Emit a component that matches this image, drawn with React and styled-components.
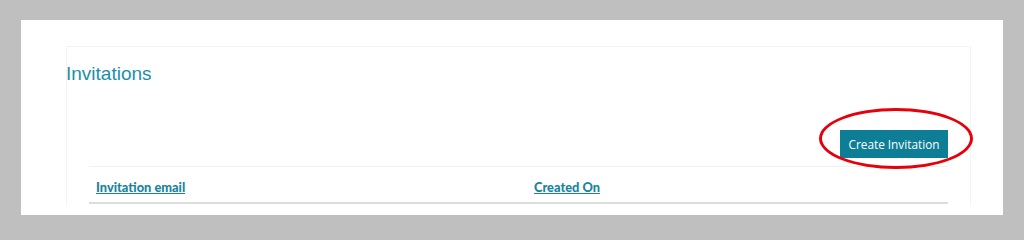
import React from "react";
import styled, { createGlobalStyle } from "styled-components";

const GlobalStyle = createGlobalStyle`
  html, body {
    margin: 0;
    padding: 0;
    background: #bfbfbf;
    height: 236px;
    overflow: hidden;
  }
`;

const Page = styled.div`
  padding: 20px 21px 0 21px;
`;

const Panel = styled.div`
  background: #ffffff;
  height: 195px;
  padding: 26px 0 0 45px;
  box-sizing: border-box;
  overflow: hidden;
`;

const Card = styled.div`
  width: 905px;
  height: 160px;
  box-sizing: border-box;
  border: 1px solid #f4f4f4;
  border-bottom: none;
  padding-top: 16px;
`;

const Title = styled.h2`
  margin: 0 0 0 -1px;
  font-family: "Liberation Sans", Arial, sans-serif;
  font-weight: normal;
  font-size: 19px;
  line-height: 22px;
  color: #1e8ea8;
`;

const Body = styled.div`
  padding: 0 22px;
`;

const Toolbar = styled.div`
  display: flex;
  justify-content: flex-end;
  margin-top: 45px;
  margin-bottom: 8px;
`;

const Highlight = styled.div`
  position: relative;
`;

const Ring = styled.div`
  position: absolute;
  left: -21px;
  top: -22px;
  width: 154px;
  height: 61px;
  box-sizing: border-box;
  border: 3px solid #e5000a;
  border-radius: 50%;
  pointer-events: none;
`;

const Button = styled.button`
  display: block;
  width: 108px;
  height: 28px;
  padding: 0;
  border: none;
  background: #0d7e95;
  color: #ffffff;
  font-family: "Open Sans", "Noto Sans", sans-serif;
  font-size: 11.8px;
  cursor: pointer;
`;

const Table = styled.table`
  width: 100%;
  border-collapse: collapse;
  border-top: 1px solid #f1f1f1;
`;

const HeadCell = styled.th`
  text-align: left;
  width: ${(p) => p.width || "auto"};
  height: 31px;
  padding: 4px 7px 0 7px;
  border-bottom: 2px solid #dcdcdc;
  vertical-align: middle;
`;

const SortLink = styled.a`
  font-family: Lato, "Open Sans", sans-serif;
  font-weight: 900;
  font-size: 12.8px;
  color: #1a84a0;
  text-decoration: underline;
  cursor: pointer;
`;

export default function App() {
  return (
    <>
      <GlobalStyle />
      <Page>
        <Panel>
          <Card>
            <Title>Invitations</Title>
            <Body>
              <Toolbar>
                <Highlight>
                  <Button>Create Invitation</Button>
                  <Ring />
                </Highlight>
              </Toolbar>
              <Table>
                <thead>
                  <tr>
                    <HeadCell width="424px">
                      <SortLink>Invitation email</SortLink>
                    </HeadCell>
                    <HeadCell>
                      <SortLink>Created On</SortLink>
                    </HeadCell>
                  </tr>
                </thead>
              </Table>
            </Body>
          </Card>
        </Panel>
      </Page>
    </>
  );
}
